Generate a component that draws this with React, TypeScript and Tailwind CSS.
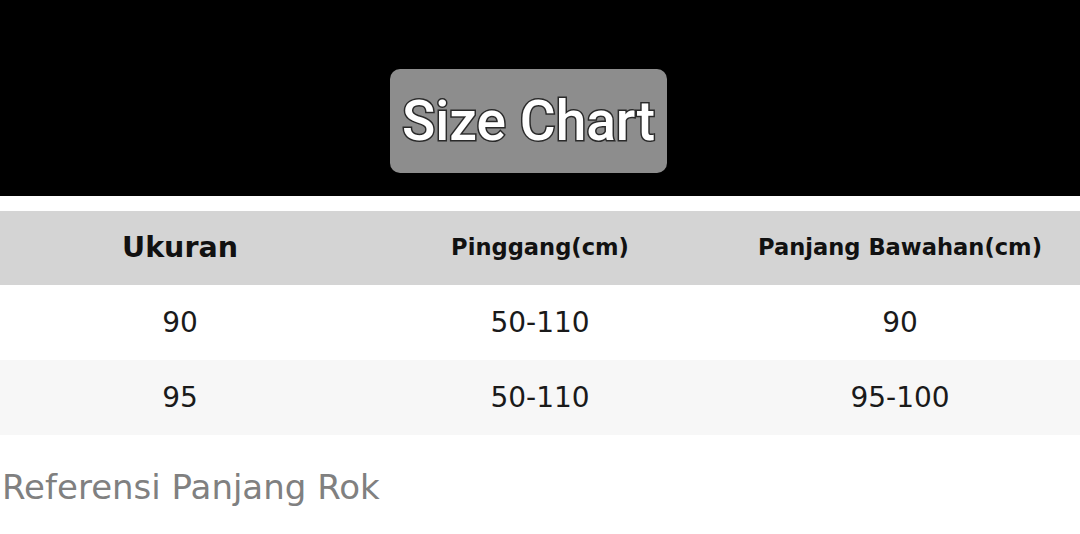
const rows = [
  { size: "90", waist: "50-110", length: "90" },
  { size: "95", waist: "50-110", length: "95-100" },
]

export default function App() {
  return (
    <div className="w-[1080px] h-[534px] overflow-hidden bg-white font-['DejaVu_Sans',sans-serif]">
      {/* Title band */}
      <div className="h-[196px] bg-black pt-[69px] pl-[390px]">
        <div className="w-[277px] h-[104px] rounded-[10px] bg-[#8d8d8d] flex items-center justify-center">
          <span className="font-['Roboto',sans-serif] font-medium text-[55px] leading-none text-white [-webkit-text-stroke:3px_#2a2a2a] [paint-order:stroke_fill]">
            Size Chart
          </span>
        </div>
      </div>

      {/* Table */}
      <div className="mt-[15px]">
        <div className="grid grid-cols-3 h-[74px] items-center bg-[#d4d4d4] text-[#111] font-bold text-center">
          <div className="text-[28.5px]">Ukuran</div>
          <div className="text-[22.6px]">Pinggang(cm)</div>
          <div className="text-[22.6px]">Panjang Bawahan(cm)</div>
        </div>
        {rows.map((row, i) => (
          <div
            key={row.size}
            className={`grid grid-cols-3 h-[75px] items-center text-center text-[28px] text-[#1a1a1a] ${
              i % 2 === 1 ? "bg-[#f7f7f7]" : "bg-white"
            }`}
          >
            <div>{row.size}</div>
            <div>{row.waist}</div>
            <div>{row.length}</div>
          </div>
        ))}
      </div>

      <div className="mt-[35px] pl-[2px] text-[34px] leading-none text-[#808080]">Referensi Panjang Rok</div>
    </div>
  )
}
